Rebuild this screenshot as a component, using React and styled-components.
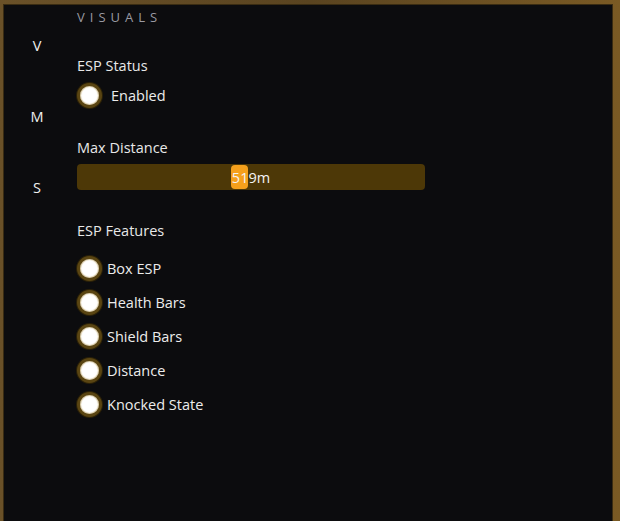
import React from "react";
import styled, { createGlobalStyle } from "styled-components";

const Global = createGlobalStyle`
  html, body { margin: 0; padding: 0; height: 100%; background: #5c4320; overflow: hidden; }
  #root { height: 100%; }
  * { box-sizing: border-box; }
`;

const Frame = styled.div`
  height: 521px;
  padding: 4px 7px 0 3px;
  background: linear-gradient(90deg, #6a5128 0%, #5a4420 50%, #7a5a24 100%);
`;

const Panel = styled.div`
  height: 540px;
  background: #0c0c0e;
  border: 1px solid #3a2c12;
  display: flex;
  font-family: "Segoe UI", "Open Sans", "Noto Sans", sans-serif;
  color: #ececec;
`;

const Sidebar = styled.nav`
  width: 66px;
  display: flex;
  flex-direction: column;
  align-items: center;
  padding-top: 28px;
  gap: 46px;
`;

const NavItem = styled.div`
  font-size: 14.5px;
  line-height: 25px;
  height: 25px;
  color: #f0f0f0;
`;

const Content = styled.main`
  flex: 1;
  padding-left: 7px;
  display: flex;
  flex-direction: column;
`;

const Header = styled.div`
  font-size: 13px;
  letter-spacing: 5px;
  color: #9a9aa2;
  line-height: 20px;
  margin-top: 2px;
`;

const Label = styled.div`
  font-size: 14.5px;
  line-height: 20px;
  color: #e8e8e8;
  margin-top: ${(p) => p.$mt || 0}px;
`;

const OptionRow = styled.div`
  display: flex;
  align-items: center;
  gap: ${(p) => p.$gap || 5}px;
  height: 34px;
  margin-top: ${(p) => p.$mt || 0}px;
  font-size: 14.5px;
`;

const Radio = styled.span`
  width: 25px;
  height: 25px;
  border-radius: 50%;
  background: #fff;
  border: 3px solid #5a4512;
  box-shadow: 0 0 0 1px #2a2008, inset 0 0 1px 1px #d8c8a0;
  flex: none;
`;

const SliderTrack = styled.div`
  position: relative;
  width: 348px;
  height: 26px;
  margin-top: 6px;
  border-radius: 4px;
  background: #4d3807;
  display: flex;
  align-items: center;
  justify-content: center;
`;

const Thumb = styled.span`
  position: absolute;
  top: 1px;
  width: 17px;
  height: 24px;
  border-radius: 4px;
  background: #f5a01c;
`;

const SliderValue = styled.span`
  position: relative;
  font-size: 14.5px;
  color: #f4f4f4;
`;

const FeatureList = styled.div`
  display: flex;
  flex-direction: column;
  margin-top: 10px;
`;

const features = ["Box ESP", "Health Bars", "Shield Bars", "Distance", "Knocked State"];

export default function App() {
  const value = 519;
  const thumbLeft = 154;
  return (
    <>
      <Global />
      <Frame>
        <Panel>
          <Sidebar>
            <NavItem>V</NavItem>
            <NavItem>M</NavItem>
            <NavItem>S</NavItem>
          </Sidebar>
          <Content>
            <Header>VISUALS</Header>
            <Label $mt={29}>ESP Status</Label>
            <OptionRow $gap={9} $mt={2}>
              <Radio />
              <span>Enabled</span>
            </OptionRow>
            <Label $mt={26}>Max Distance</Label>
            <SliderTrack>
              <Thumb style={{ left: thumbLeft }} />
              <SliderValue>{value}m</SliderValue>
            </SliderTrack>
            <Label $mt={31}>ESP Features</Label>
            <FeatureList>
              {features.map((f) => (
                <OptionRow key={f}>
                  <Radio />
                  <span>{f}</span>
                </OptionRow>
              ))}
            </FeatureList>
          </Content>
        </Panel>
      </Frame>
    </>
  );
}
